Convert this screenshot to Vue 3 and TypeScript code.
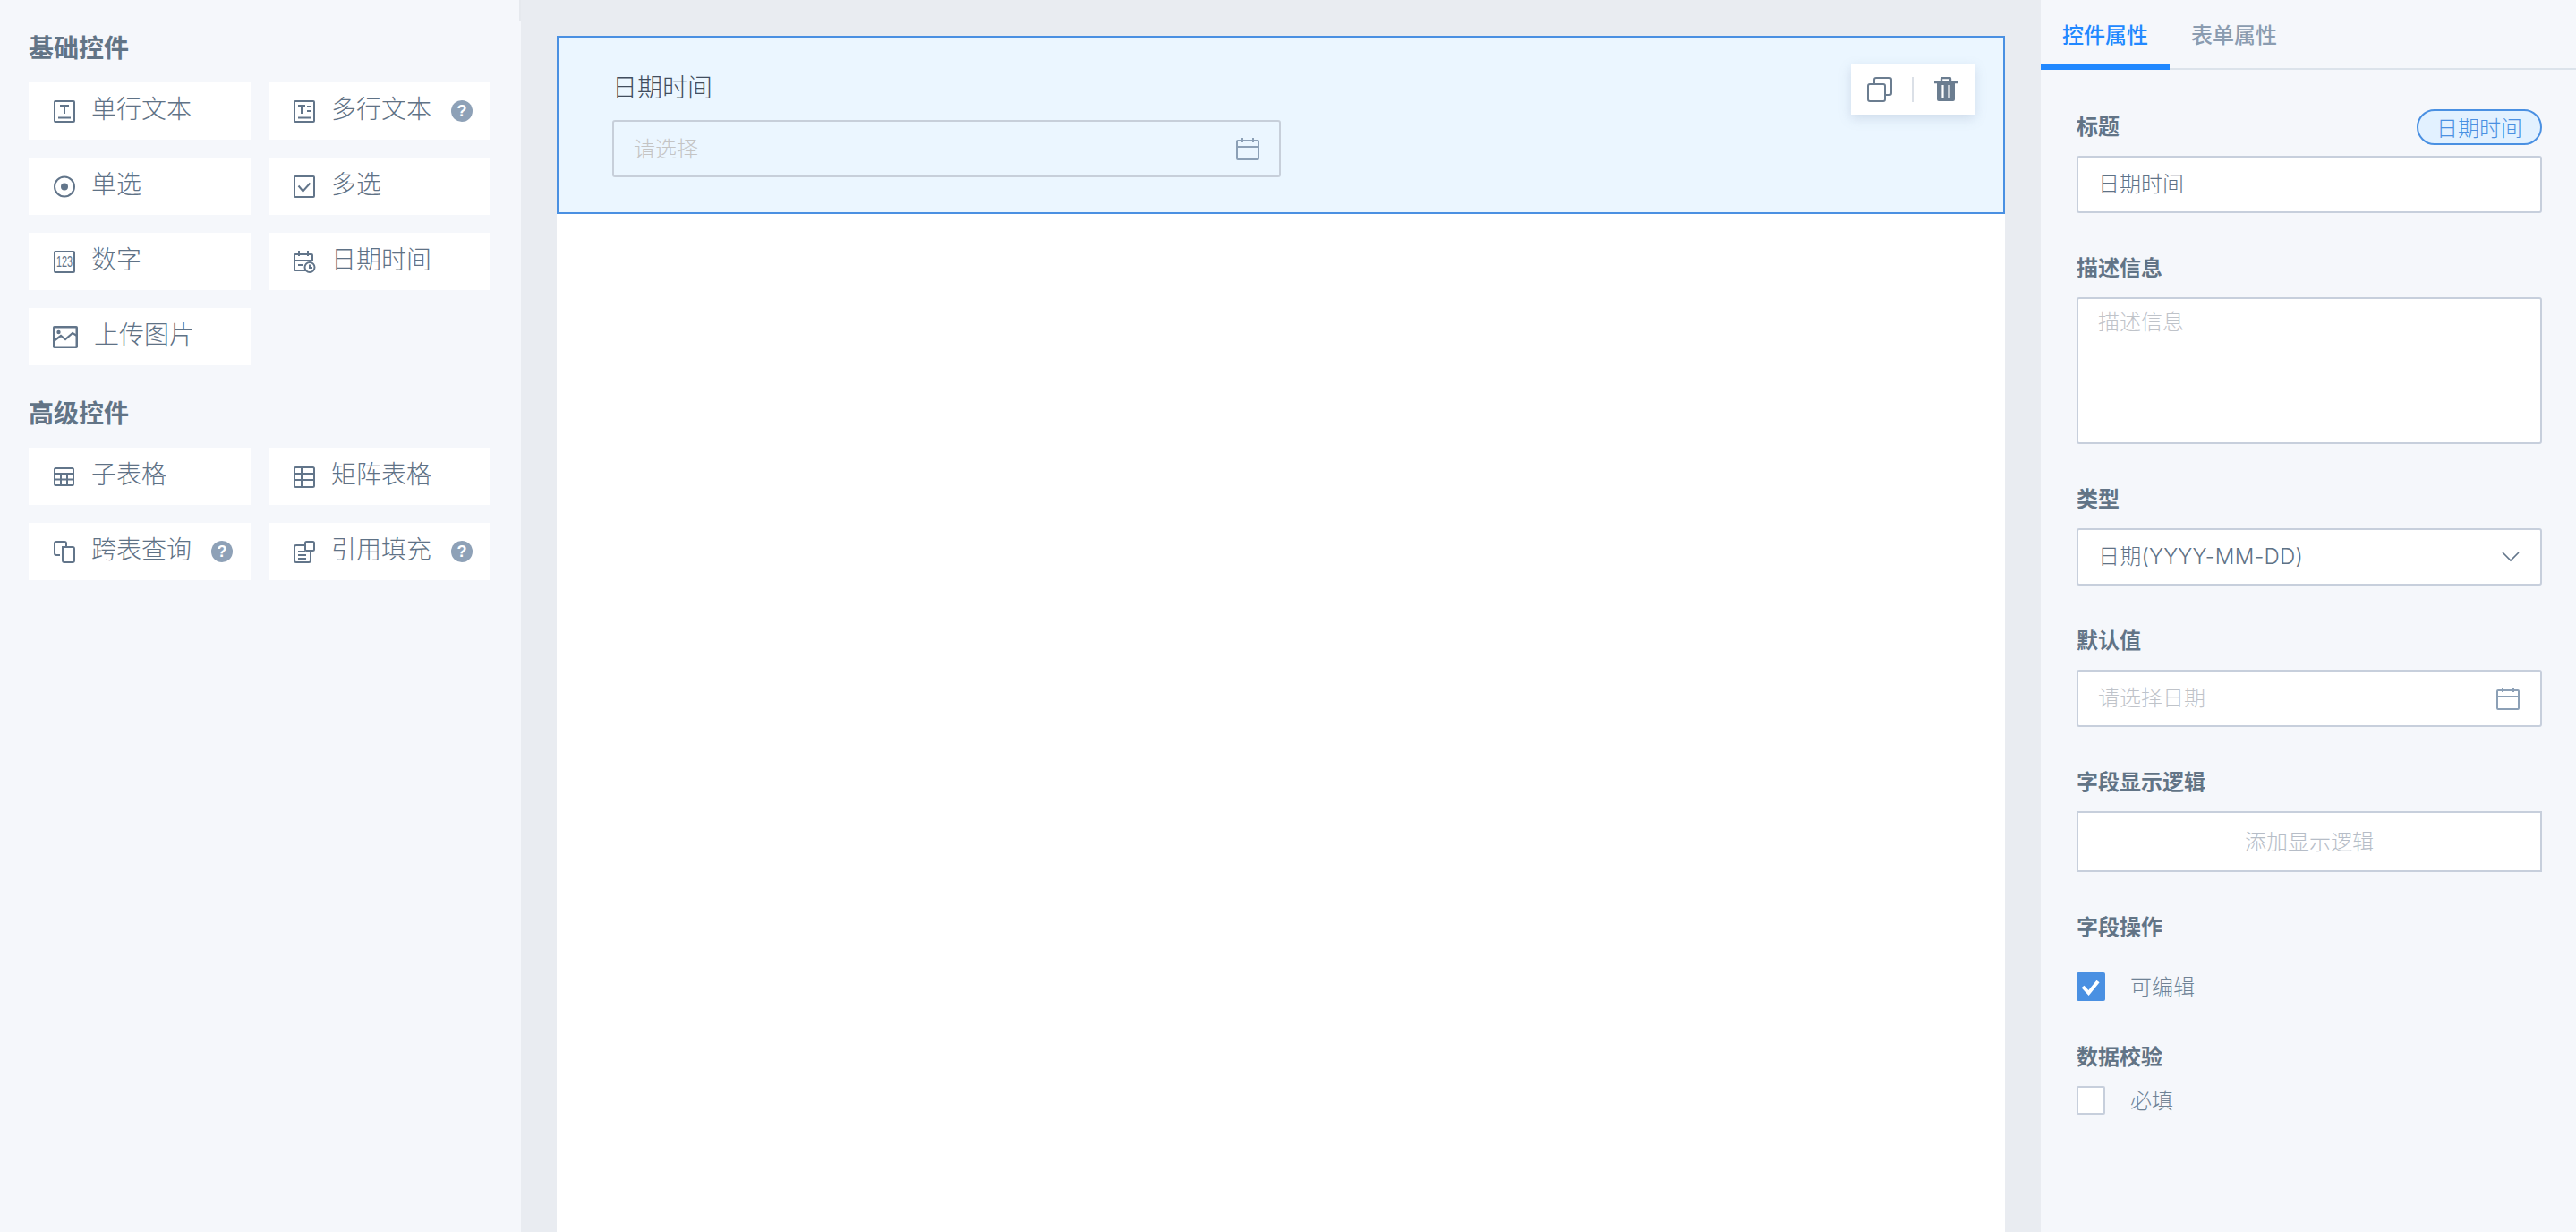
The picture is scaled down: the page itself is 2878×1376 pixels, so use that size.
<template>
  <div class="page">
    <aside class="palette">
      <section v-for="group in groups" :key="group.title" class="group">
        <h3 class="group-title">{{ group.title }}</h3>
        <div class="widget-grid">
          <div v-for="w in group.items" :key="w.label" class="widget">
            <svg class="widget-icon" :class="{ 'icon-image': w.icon === 'image' }" :viewBox="w.icon === 'image' ? '0 0 28 25' : '0 0 24 25'" fill="none" stroke="#62758a" stroke-width="2" v-html="icons[w.icon]"></svg>
            <span class="widget-label">{{ w.label }}</span>
            <span v-if="w.help" class="help">?</span>
          </div>
        </div>
      </section>
    </aside>

    <main class="workspace">
      <div class="canvas">
        <div class="field-card">
          <div class="card-label">日期时间</div>
          <div class="card-input">
            <span class="placeholder neutral">请选择</span>
            <svg class="cal" viewBox="0 0 26 25" fill="none" stroke="#8ca0b6" stroke-width="2">
              <rect x="1" y="3" width="24" height="21" rx="1" />
              <path d="M1 10h24M7 0v5M19 0v5" />
            </svg>
          </div>
          <div class="card-tools">
            <svg class="tool" viewBox="0 0 28 28" fill="none" stroke="#6b7d90" stroke-width="2">
              <rect x="1" y="8" width="19" height="19" rx="2" />
              <path d="M8 8V3a2 2 0 0 1 2-2h15a2 2 0 0 1 2 2v15a2 2 0 0 1-2 2h-5" />
            </svg>
            <span class="tool-sep"></span>
            <svg class="tool" viewBox="0 0 28 28" fill="none" stroke="#6b7d90" stroke-width="2.400">
              <path d="M1 6h26M9 5V2a1 1 0 0 1 1-1h8a1 1 0 0 1 1 1v3" />
              <path d="M4 6h20v19a2 2 0 0 1-2 2H6a2 2 0 0 1-2-2z" fill="#6b7d90" stroke="none" />
              <path d="M10.500 9v15M17.500 9v15" stroke="#fff" stroke-width="2.200" />
            </svg>
          </div>
        </div>
      </div>
    </main>

    <aside class="props">
      <div class="tabs">
        <span class="tab active">控件属性</span>
        <span class="tab">表单属性</span>
      </div>
      <div class="form">
        <div class="form-item">
          <div class="form-label">
            <span>标题</span>
            <span class="badge">日期时间</span>
          </div>
          <div class="box"><span>日期时间</span></div>
        </div>
        <div class="form-item">
          <div class="form-label">描述信息</div>
          <div class="box area"><span class="placeholder">描述信息</span></div>
        </div>
        <div class="form-item">
          <div class="form-label">类型</div>
          <div class="box">
            <span class="latin">日期(YYYY-MM-DD)</span>
            <svg class="chevron" viewBox="0 0 20 12" fill="none" stroke="#62758a" stroke-width="1.600">
              <path d="M1 1l9 9 9-9" />
            </svg>
          </div>
        </div>
        <div class="form-item">
          <div class="form-label">默认值</div>
          <div class="box">
            <span class="placeholder">请选择日期</span>
            <svg class="cal" viewBox="0 0 26 25" fill="none" stroke="#8ca0b6" stroke-width="2">
              <rect x="1" y="3" width="24" height="21" rx="1" />
              <path d="M1 10h24M7 0v5M19 0v5" />
            </svg>
          </div>
        </div>
        <div class="form-item">
          <div class="form-label">字段显示逻辑</div>
          <div class="add-logic">添加显示逻辑</div>
        </div>
        <div class="form-item">
          <div class="form-label">字段操作</div>
          <label class="check-row first-check">
            <span class="check on">
              <svg viewBox="0 0 32 32" fill="none" stroke="#fff" stroke-width="4">
                <path d="M7 16l6.500 7L24 10" />
              </svg>
            </span>
            <span class="check-text">可编辑</span>
          </label>
        </div>
        <div class="form-item tight">
          <div class="form-label">数据校验</div>
          <label class="check-row">
            <span class="check"></span>
            <span class="check-text">必填</span>
          </label>
        </div>
      </div>
    </aside>
  </div>
</template>

<script setup lang="ts">
interface Widget {
  label: string;
  icon: string;
  help?: boolean;
}

const icons: Record<string, string> = {
  text: '<rect x="1" y="1" width="22" height="23" rx="1"/><path d="M7 6h10M12 6v9M5 19.500h14"/>',
  multi: '<rect x="1" y="1" width="22" height="23" rx="1"/><path d="M5 6h8M9 6v9M15 7h5M15 12h5M5 19.500h15"/>',
  radio: '<circle cx="12" cy="12.500" r="11"/><circle cx="12" cy="12.500" r="4" fill="#62758a" stroke="none"/>',
  check: '<rect x="1" y="1" width="22" height="23" rx="1"/><path d="M5.500 11.500l5 6 8-9"/>',
  number: '<rect x="1" y="1" width="22" height="23" rx="1"/><text x="12" y="18" text-anchor="middle" font-family="Liberation Sans" font-size="16" textLength="18" lengthAdjust="spacingAndGlyphs" fill="#62758a" stroke="none">123</text>',
  date: '<path d="M14 22H2a1 1 0 0 1-1-1V5a1 1 0 0 1 1-1h18a1 1 0 0 1 1 1v7M1 11h20M6 0v6M16 0v6M5 16h5"/><circle cx="18" cy="18.500" r="5.500" fill="#fff"/><path d="M18 15.500v3.500h3"/>',
  image: '<rect x="1.250" y="1.250" width="25.500" height="22.500" rx="0.500" stroke-width="2.500"/><path d="M1 17l8-6 5 4 8-7 5 3" stroke-width="2.200"/><circle cx="6.500" cy="7" r="2.200" fill="#62758a" stroke="none"/>',
  table: '<rect x="1" y="3" width="21" height="19" rx="1.500"/><path d="M1 9h21M1 15.500h21M8 9v13M15 9v13"/>',
  matrix: '<rect x="1" y="2" width="22" height="22" rx="1.500"/><path d="M1 9h22M1 16h22M9 2v22"/>',
  lookup: '<path d="M7 16H3a2 2 0 0 1-2-2V3a2 2 0 0 1 2-2h9a2 2 0 0 1 2 2v3"/><path d="M10 7h11a2 2 0 0 1 2 2v13a2 2 0 0 1-2 2h-9a2 2 0 0 1-2-2z"/>',
  quote: '<path d="M14 5H3a2 2 0 0 0-2 2v15a2 2 0 0 0 2 2h14a2 2 0 0 0 2-2V12M5 12h8M5 16h9M5 20h9"/><rect x="13" y="1" width="10" height="10" rx="1.500"/>',
};

const groups: { title: string; items: Widget[] }[] = [
  {
    title: "基础控件",
    items: [
      { label: "单行文本", icon: "text" },
      { label: "多行文本", icon: "multi", help: true },
      { label: "单选", icon: "radio" },
      { label: "多选", icon: "check" },
      { label: "数字", icon: "number" },
      { label: "日期时间", icon: "date" },
      { label: "上传图片", icon: "image" },
    ],
  },
  {
    title: "高级控件",
    items: [
      { label: "子表格", icon: "table" },
      { label: "矩阵表格", icon: "matrix" },
      { label: "跨表查询", icon: "lookup", help: true },
      { label: "引用填充", icon: "quote", help: true },
    ],
  },
];
</script>

<style>
html,
body {
  margin: 0;
  height: 100%;
  overflow: hidden;
}
</style>

<style scoped>
.page {
  display: flex;
  width: 2878px;
  height: 1376px;
  overflow: hidden;
  background: #e9ecf1;
  font-family: "Noto Sans CJK SC", "Noto Sans", sans-serif;
  font-weight: 300;
  font-size: 24px;
  color: #5f7286;
}

.palette {
  position: relative;
  flex: 0 0 582px;
  box-sizing: border-box;
  padding: 32px 34px 0 32px;
  background: #f5f7fb;
}

.palette::after {
  content: "";
  position: absolute;
  top: 0;
  right: 0;
  width: 2px;
  height: 24px;
  background: #e6e9ee;
}

.group + .group {
  margin-top: 32px;
}

.group-title {
  margin: 0 0 20px;
  font-size: 28px;
  line-height: 40px;
  font-weight: 700;
  color: #627486;
}

.widget-grid {
  display: grid;
  grid-template-columns: 248px 248px;
  gap: 20px;
}

.widget {
  display: flex;
  align-items: center;
  height: 64px;
  box-sizing: border-box;
  padding: 0 20px 0 28px;
  background: #fff;
}

.widget-icon {
  flex: none;
  width: 24px;
  height: 25px;
  margin-right: 18px;
  overflow: visible;
}

.icon-image {
  width: 28px;
  margin-left: -1px;
  margin-right: 18px;
}

.widget-label {
  flex: 1;
  font-size: 28px;
  line-height: 40px;
  margin-bottom: 8px;
}

.help {
  flex: none;
  width: 24px;
  height: 24px;
  border-radius: 50%;
  background: #8ea1b7;
  color: #fff;
  font-size: 18px;
  font-weight: 700;
  font-family: "Liberation Sans", sans-serif;
  line-height: 24px;
  text-align: center;
}

.workspace {
  flex: 1;
  box-sizing: border-box;
  padding: 40px 40px 0;
  min-width: 0;
}

.canvas {
  height: 100%;
  background: #fff;
}

.field-card {
  position: relative;
  height: 199px;
  box-sizing: border-box;
  padding: 34px 0 0 60px;
  background: #ebf6ff;
  border: 2px solid #4a90e2;
}

.card-label {
  font-size: 28px;
  line-height: 40px;
  color: #414d5e;
}

.card-input {
  display: flex;
  align-items: center;
  justify-content: space-between;
  width: 747px;
  height: 64px;
  margin-top: 18px;
  box-sizing: border-box;
  padding: 0 22px;
  border: 2px solid #c7cfda;
  border-radius: 3px;
}

.placeholder {
  color: #bfc3c9;
  margin-bottom: 4px;
}

.placeholder.neutral {
  color: #c4c4c4;
}

.cal {
  flex: none;
  width: 26px;
  height: 25px;
}

.card-tools {
  position: absolute;
  top: 30px;
  right: 32px;
  display: flex;
  align-items: center;
  justify-content: space-between;
  width: 138px;
  height: 56px;
  box-sizing: border-box;
  padding: 0 18px;
  background: #fff;
  box-shadow: 0 4px 12px rgba(120, 140, 170, 0.25);
}

.tool {
  width: 28px;
  height: 28px;
}

.tool-sep {
  width: 2px;
  height: 28px;
  background: #dbe0e7;
}

.props {
  flex: 0 0 598px;
  background: #f5f7fb;
}

.tabs {
  display: flex;
  height: 78px;
  box-sizing: border-box;
  border-bottom: 2px solid #dce3eb;
}

.tab {
  box-sizing: border-box;
  width: 144px;
  height: 78px;
  padding-top: 20px;
  text-align: center;
  line-height: 36px;
  font-weight: 500;
  color: #8b9cb0;
}

.tab.active {
  color: #2188ff;
  border-bottom: 6px solid #2188ff;
}

.form {
  padding: 44px 38px 0 40px;
}

.form-item + .form-item {
  margin-top: 42px;
}

.form-item.tight {
  margin-top: 43px;
}

.form-label {
  display: flex;
  align-items: flex-start;
  justify-content: space-between;
  height: 40px;
  margin-bottom: 12px;
  line-height: 36px;
  font-weight: 700;
  color: #627486;
}

.badge {
  box-sizing: border-box;
  width: 140px;
  height: 40px;
  text-align: center;
  border: 2px solid #4a90e2;
  border-radius: 20px;
  background: #e2f1ff;
  color: #4a90e2;
  font-weight: 300;
}

.box {
  display: flex;
  align-items: center;
  justify-content: space-between;
  height: 64px;
  box-sizing: border-box;
  padding: 0 23px 0 22px;
  background: #fff;
  border: 2px solid #c7cfdc;
  border-radius: 3px;
}

.box > span {
  margin-bottom: 6px;
}

.box.area {
  align-items: flex-start;
  height: 164px;
  padding-top: 6px;
}

.latin {
  font-family: Inter, "Noto Sans CJK SC", sans-serif;
  letter-spacing: 0.2px;
}

.chevron {
  width: 20px;
  height: 12px;
}

.add-logic {
  height: 68px;
  box-sizing: border-box;
  background: #fff;
  border: 2px solid #c7cfdc;
  line-height: 62px;
  text-align: center;
  color: #b6bdc7;
}

.check-row {
  display: flex;
  align-items: center;
  gap: 28px;
  height: 32px;
  color: #6f8295;
}

.check-text {
  margin-bottom: 4px;
}

.first-check {
  margin-top: 30px;
}

.check {
  flex: none;
  width: 32px;
  height: 32px;
  box-sizing: border-box;
  background: #fff;
  border: 2px solid #c7cfdc;
  border-radius: 2px;
}

.check.on {
  background: #4a90e2;
  border: none;
}

.check svg {
  display: block;
  width: 32px;
  height: 32px;
}
</style>
